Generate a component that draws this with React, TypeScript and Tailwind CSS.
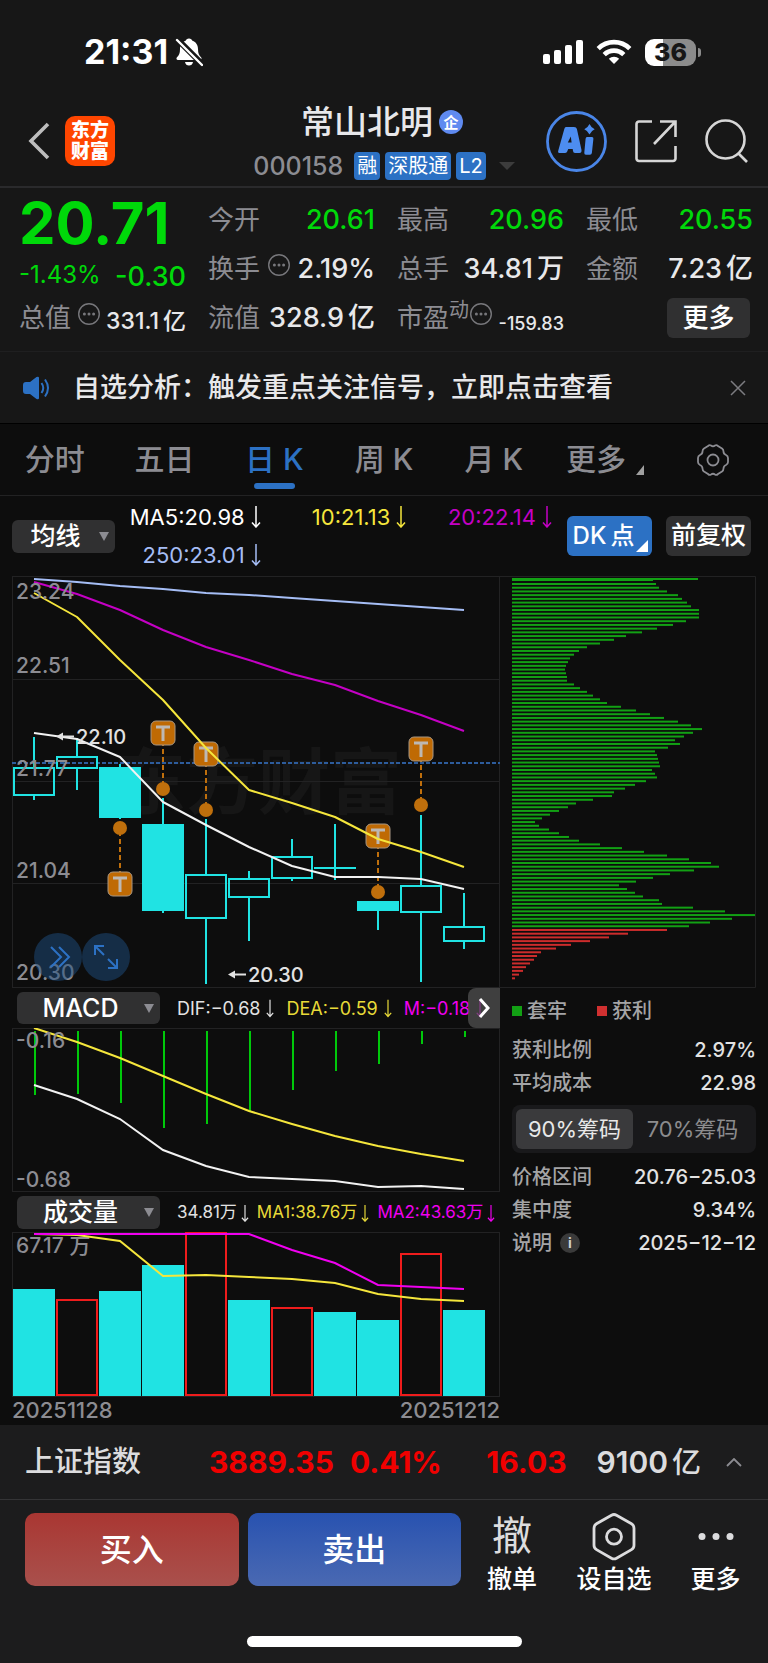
import React from 'react';

const STEP = 43;
const FIRST = 22;
const cx = (i: number) => FIRST + STEP * i;
const toPoints = (ys: number[]) => ys.map((y, i) => `${cx(i)},${y}`).join(' ');

// [high, body top, body bottom, low, filled]
const candles: [number, number, number, number, boolean][] = [
  [161, 192, 219, 224, false],
  [162, 181, 192, 214, false],
  [188, 192, 241, 243, true],
  [222, 249, 334, 337, true],
  [243, 299, 342, 408, false],
  [295, 303, 321, 365, false],
  [263, 281, 302, 305, false],
  [248, 292, 292, 304, false],
  [325, 326, 334, 354, true],
  [239, 310, 336, 406, false],
  [317, 351, 365, 373, false],
];

const ma5 = [157, 163, 181, 226, 249, 271, 290, 301, 301, 303, 313];
const ma10 = [17, 41, 84, 124, 172, 214, 227, 241, 263, 276, 291];
const ma20 = [6, 18, 34, 54, 71, 84, 98, 109, 125, 139, 155];
const ma250 = [3, 6, 10, 13, 17, 19, 22, 25, 28, 31, 34];

// candle index, y of the T box, y of the dot
const marks = [
  { i: 2, box: 308, dot: 252 },
  { i: 3, box: 157, dot: 213 },
  { i: 4, box: 178, dot: 234 },
  { i: 8, box: 260, dot: 316 },
  { i: 9, box: 173, dot: 229 },
];

const lossChips = [
  144, 147, 155, 166, 170, 175, 179, 187, 187, 187, 174, 161, 145, 130, 114, 102, 88, 75, 67, 62, 58, 56, 54, 53, 54,
  55, 55, 62, 68, 75, 81, 88, 95, 109, 124, 138, 152, 166, 179, 190, 181, 172, 163, 168, 156, 143, 145, 146, 147, 148,
  140, 143, 145, 134, 123, 113, 102, 100, 81, 64, 56, 47, 38, 30, 23, 27, 37, 47, 57, 67, 88, 110, 132, 155, 177, 199,
  207, 182, 158, 141, 124, 107, 115, 123, 131, 147, 150, 181, 213, 243, 220, 198, 177,
];
const profitChips = [155, 116, 97, 78, 59, 44, 29, 25, 22, 18, 14, 11, 7, 3];

const macdBars = [67, 66, 75, 100, 96, 84, 62, 43, 36, 16, 9];
const dea = [0, 14, 30, 48, 66, 83, 96, 108, 118, 126, 133];
const dif = [57, 71, 91, 122, 138, 149, 151, 153, 159, 158, 161];

const volumes = [
  { top: 57, up: false },
  { top: 68, up: true },
  { top: 59, up: false },
  { top: 33, up: false },
  { top: 1, up: true },
  { top: 68, up: false },
  { top: 76, up: true },
  { top: 80, up: false },
  { top: 88, up: false },
  { top: 22, up: true },
  { top: 78, up: false },
];
const volMa1 = [2, 3, 9, 44, 43, 45, 47, 51, 62, 67, 69];
const volMa2 = [2, 2, 2, 2, 2, 2, 18, 31, 53, 55, 57];

function Down({ className = 'h-[22px] w-[10px]' }: { className?: string }) {
  return (
    <svg viewBox="0 0 10 22" className={className} fill="none" stroke="currentColor" strokeWidth="1.5" aria-hidden="true">
      <path d="M5 0v21M1 16.5l4 4.5 4-4.5" />
    </svg>
  );
}

function Dots() {
  return (
    <svg viewBox="0 0 24 24" className="mb-2 h-6 w-6 shrink-0 text-[#77777b]" aria-hidden="true">
      <circle cx="12" cy="12" r="10.3" fill="none" stroke="currentColor" strokeWidth="1.4" />
      <circle cx="7.4" cy="12" r="1.5" fill="currentColor" />
      <circle cx="12" cy="12" r="1.5" fill="currentColor" />
      <circle cx="16.6" cy="12" r="1.5" fill="currentColor" />
    </svg>
  );
}

function StatusBar() {
  return (
    <div className="flex h-[98px] items-center justify-between pr-[67px] pl-[84px] pt-[6px]">
      <div className="flex items-center gap-[7px]">
        <span className="text-[34px] leading-none font-bold text-white">21:31</span>
        <svg viewBox="0 0 28 30" className="h-[30px] w-7" aria-hidden="true">
          <path
            d="M14 1.5c1.8 0 3 1 3.4 2.3 3.6 1.2 5.6 4.4 5.6 8.2 0 4.4 1 6.4 3 8.3 1 1 .6 2.7-1 2.7H3c-1.6 0-2-1.7-1-2.7 2-1.9 3-3.9 3-8.3 0-3.8 2-7 5.6-8.2C11 2.5 12.2 1.5 14 1.5zM10 25h8c-.4 2.3-2 3.6-4 3.6s-3.6-1.3-4-3.6z"
            fill="#fff"
          />
          <path d="M1 1l26 26" stroke="#171717" strokeWidth="6" />
          <path d="M2 3l25 25" stroke="#fff" strokeWidth="2.4" strokeLinecap="round" />
        </svg>
      </div>
      <div className="flex items-center gap-[13px]">
        <svg viewBox="0 0 40 26" className="h-[26px] w-10" fill="#fff" aria-hidden="true">
          <rect x="0" y="15" width="7" height="10" rx="2" />
          <rect x="11" y="11" width="7" height="14" rx="2" />
          <rect x="22" y="6" width="7" height="19" rx="2" />
          <rect x="33" y="1" width="7" height="24" rx="2" />
        </svg>
        <svg viewBox="0 0 36 26" className="h-[26px] w-9" fill="none" stroke="#fff" strokeWidth="4.6" aria-hidden="true">
          <path d="M2.2 9.6a22.5 22.5 0 0 1 31.6 0" />
          <path d="M8.2 15.6a14 14 0 0 1 19.6 0" />
          <path d="M18 25l-5.2-5.2a7.4 7.4 0 0 1 10.4 0z" fill="#fff" stroke="none" />
        </svg>
        <div className="flex items-center gap-[2px]">
          <div className="flex h-[27px] w-[51px] items-center justify-center rounded-[9px] bg-linear-to-r from-white from-36% to-[#8c8c8c] to-36% text-[25px] leading-none font-extrabold text-[#171717]">
            36
          </div>
          <div className="h-[9px] w-[3px] rounded-r-full bg-[#8c8c8c]" />
        </div>
      </div>
    </div>
  );
}

function Header() {
  return (
    <header className="grid h-[90px] grid-cols-[1fr_auto_1fr] items-center border-b-2 border-[#2a2a2c] pr-5 pb-[2px] pl-7">
      <div className="flex items-center gap-[15px]">
        <button type="button" aria-label="返回">
          <svg viewBox="0 0 22 38" className="h-[38px] w-[22px]" fill="none" stroke="#bdbdbd" strokeWidth="3.6">
            <path d="M20 2L3 19l17 17" />
          </svg>
        </button>
        <div className="flex h-[50px] w-[50px] flex-col items-center justify-center rounded-[10px] bg-[#ff4600] text-[19px] leading-[21px] font-black text-white">
          <span>东方</span>
          <span>财富</span>
        </div>
      </div>
      <div className="flex flex-col items-center gap-2.5 pr-3 whitespace-nowrap">
        <h1 className="flex items-center gap-1.5 text-[33px] leading-10 font-medium text-[#e8e8ea]">
          常山北明
          <span className="flex h-6 w-6 items-center justify-center rounded-full bg-[#5f8af0] text-[15px] leading-none font-bold text-white">
            企
          </span>
        </h1>
        <div className="flex items-center gap-[5px] pl-1 text-xl leading-7 text-white">
          <span className="mr-[6px] text-[25px] leading-7 font-medium text-[#8c8c92]">000158</span>
          <span className="rounded bg-[#2c71c4] px-[3px]">融</span>
          <span className="rounded bg-[#2c71c4] px-[3px]">深股通</span>
          <span className="rounded bg-[#2c71c4] px-[3px]">L2</span>
          <svg viewBox="0 0 16 8" className="ml-2 h-2 w-4" fill="#3c3c3c" aria-hidden="true">
            <path d="M0 0h16L8 8z" />
          </svg>
        </div>
      </div>
      <div className="flex items-center justify-end gap-7">
        <button type="button" aria-label="AI助手">
          <svg viewBox="0 0 61 61" className="h-[61px] w-[61px]" fill="#4d8df0">
            <circle cx="30.5" cy="30.5" r="29" fill="none" stroke="#4a86e8" strokeWidth="2.8" />
            <path
              fillRule="evenodd"
              d="M20 16h8q2.5 0 2.9 2l4.6 21q.3 3-2 3h-4.5q-1.8 0-2-2l-.3-2h-4.5l-1 2.400q-.7 1.6-2.4 1.6h-4.7q-2.7 0-1.8-2.6l6-21.4q.5-2 1.7-2zM21.8 31.5h3.8l-.8-6z"
            />
            <path d="M41 26h5q1.6 0 1.4 1.800l-1.5 14q-.2 2-2 2h-4q-1.8 0-1.6-2l1.3-14q.2-1.8 1.4-1.8z" />
            <path d="M43.5 13q1.6 3.6 5.2 5.2-3.6 1.6-5.2 5.2-1.6-3.6-5.2-5.2 3.6-1.6 5.2-5.2z" />
          </svg>
        </button>
        <button type="button" aria-label="分享">
          <svg viewBox="0 0 42 44" className="h-11 w-[42px]" fill="none" stroke="#d6d6d6" strokeWidth="2.6">
            <path d="M17 2.5H4A2.5 2.5 0 0 0 1.5 5v34.5A2.5 2.5 0 0 0 4 42h34a2.5 2.5 0 0 0 2.5-2.5V27" />
            <path d="M25 2.5h15.5V18M40 3L19 25" />
          </svg>
        </button>
        <button type="button" aria-label="搜索">
          <svg viewBox="0 0 43 46" className="h-[46px] w-[43px]" fill="none" stroke="#d6d6d6" strokeWidth="2.6">
            <circle cx="20.5" cy="21.5" r="19" />
            <path d="M33 35l9 9" />
          </svg>
        </button>
      </div>
    </header>
  );
}

const label = 'text-[26px] text-[#8c8c92]';
const value = 'text-[27px] font-medium text-[#e8e8ea]';
const green = 'text-[27px] font-medium text-[#00d90a]';

// number followed by 万 or 亿
function Amount({ n, unit }: { n: string; unit: string }) {
  return (
    <span className={value}>
      {n}
      <span className="ml-1">{unit}</span>
    </span>
  );
}

function Quote() {
  return (
    <section className="grid grid-cols-4 gap-x-[22px] border-b border-[#1f1f20] pt-[7px] pr-[15px] pb-[9px] pl-[19px] leading-[30px] whitespace-nowrap">
      <div className="flex h-[49px] items-center pt-1.5 text-[58px] leading-none font-bold text-[#00d90a]">20.71</div>
      <div className="flex h-[49px] items-center justify-between">
        <span className={label}>今开</span>
        <span className={green}>20.61</span>
      </div>
      <div className="flex h-[49px] items-center justify-between">
        <span className={label}>最高</span>
        <span className={green}>20.96</span>
      </div>
      <div className="flex h-[49px] items-center justify-between">
        <span className={label}>最低</span>
        <span className={green}>20.55</span>
      </div>

      <div className="flex h-[49px] items-center justify-between pt-3 text-[#00d90a]">
        <span className="text-[24px]">-1.43%</span>
        <span className="pt-1 text-[27px] font-medium">-0.30</span>
      </div>
      <div className="flex h-[49px] items-center justify-between">
        <span className={label}>换手</span>
        <Dots />
        <span className={value}>2.19%</span>
      </div>
      <div className="flex h-[49px] items-center justify-between">
        <span className={label}>总手</span>
        <Amount n="34.81" unit="万" />
      </div>
      <div className="flex h-[49px] items-center justify-between">
        <span className={label}>金额</span>
        <Amount n="7.23" unit="亿" />
      </div>

      <div className="flex h-[49px] items-center justify-between">
        <span className={label}>总值</span>
        <Dots />
        <span className="pt-1.5 text-[23px] font-medium text-[#e8e8ea]">
          331.1<span className="ml-1">亿</span>
        </span>
      </div>
      <div className="flex h-[49px] items-center justify-between">
        <span className={label}>流值</span>
        <Amount n="328.9" unit="亿" />
      </div>
      <div className="flex h-[49px] items-center">
        <span className={label}>市盈</span>
        <span className="pb-4 text-xl text-[#8c8c92]">动</span>
        <Dots />
        <span className="ml-auto pt-3 text-[18px] font-medium text-[#e8e8ea]">-159.83</span>
      </div>
      <div className="flex h-[49px] items-center justify-end pr-[3px]">
        <button type="button" className="h-10 w-[83px] rounded-md bg-[#303031] text-[26px] font-medium text-white">
          更多
        </button>
      </div>
    </section>
  );
}

function Notice() {
  return (
    <div className="flex h-[72px] items-center border-b border-black pr-[22px] pl-[23px]">
      <svg viewBox="0 0 27 24" className="h-6 w-[27px]" fill="#2c71c4" aria-hidden="true">
        <path d="M3 6h4l6.5-5q2.5-1 2.5 1v20q0 2-2.5 1L7 18H3q-3 0-3-3V9q0-3 3-3z" />
        <path d="M18.5 7q3.5 5 0 10M22 3.5q6 8.500 0 17" fill="none" stroke="#2c71c4" strokeWidth="2" />
      </svg>
      <a href="#signal" className="ml-[23px] text-[27px] leading-9 font-medium whitespace-nowrap text-[#e8e8ea]">
        自选分析：触发重点关注信号，立即点击查看
      </a>
      <button type="button" aria-label="关闭" className="ml-auto">
        <svg viewBox="0 0 16 16" className="h-4 w-4" stroke="#7c7c80" strokeWidth="1.5">
          <path d="M1 1l14 14M15 1L1 15" />
        </svg>
      </button>
    </div>
  );
}

const tabs = ['分时', '五日', '日 K', '周 K', '月 K'];

function Tabs() {
  const [active, setActive] = React.useState('日 K');
  return (
    <nav className="grid h-[72px] grid-cols-7 border-b border-[#222223] text-[30px] leading-10 font-medium">
      {tabs.map((t) => (
        <button
          key={t}
          type="button"
          onClick={() => setActive(t)}
          className={`flex flex-col items-center pt-[15px] ${t === active ? 'text-[#2c71c4]' : 'text-[#8c8c92]'}`}
        >
          {t}
          {t === active && <span className="mt-1 h-[6px] w-[41px] rounded-full bg-[#2c71c4]" />}
        </button>
      ))}
      <button type="button" className="flex items-start justify-center gap-2.5 pt-[15px] pl-[3px] text-[#8c8c92]">
        更多
        <svg viewBox="0 0 8 10" className="mt-[26px] h-2.5 w-2" fill="#a0a0a0" aria-hidden="true">
          <path d="M8 0v10H0z" />
        </svg>
      </button>
      <button type="button" aria-label="设置" className="flex items-center justify-center">
        <svg viewBox="0 0 34 34" className="h-[34px] w-[34px]" fill="none" stroke="#8c8c92" strokeWidth="1.8">
          <path d="M12 3q1.5-1.5 3-.5 2 1.500 4 0 1.5-1 3 .5l4 2.5q1.5 1 1.5 3 0 2.5 2.5 3.5Q32 13 32 15v4q0 2-2 3-2.5 1-2.500 3.5 0 2-1.500 3l-4 2.5q-1.5 1.5-3 .5-2-1.5-4 0-1.5 1-3-.5l-4-2.5q-1.5-1-1.5-3Q6.500 23 4 22q-2-1-2-3v-4q0-2 2-3 2.5-1 2.500-3.5 0-2 1.500-3z" />
          <circle cx="17" cy="17" r="5.5" />
        </svg>
      </button>
    </nav>
  );
}

function Picker({ name, text, className }: { name: string; text: string; className: string }) {
  return (
    <div className={`flex items-center rounded-md bg-[#303031] text-white ${className}`}>
      <select
        aria-label={name}
        className="h-full min-w-0 flex-1 appearance-none bg-transparent text-center text-[25px] leading-8 font-medium outline-none"
      >
        <option>{text}</option>
      </select>
      <svg viewBox="0 0 10 9" className="mr-1.5 h-[9px] w-[10px] shrink-0" fill="#8c8c92" aria-hidden="true">
        <path d="M0 0h10L5 9z" />
      </svg>
    </div>
  );
}

function Averages() {
  return (
    <div className="flex h-20 items-center justify-between pr-[17px] pl-3">
      <Picker name="主图指标" text="均线" className="h-[33px] w-[103px]" />
      <div className="grid flex-1 grid-cols-3 gap-y-1.5 pr-[15px] text-[22px] leading-8 whitespace-nowrap">
        <span className="flex items-center justify-end gap-1.5 text-white">
          MA5:20.98
          <Down />
        </span>
        <span className="flex items-center justify-end gap-1.5 text-[#f5e63c]">
          10:21.13
          <Down />
        </span>
        <span className="flex items-center justify-end gap-1.5 text-[#c400c4]">
          20:22.14
          <Down />
        </span>
        <span className="flex items-center justify-end gap-1.5 text-[#a5bdf5]">
          250:23.01
          <Down />
        </span>
      </div>
      <div className="flex gap-3.5 text-2xl font-medium whitespace-nowrap text-white">
        <button type="button" className="relative h-10 w-[85px] rounded-md bg-[#2c71c4] pr-3">
          DK<span className="ml-1">点</span>
          <svg viewBox="0 0 12 12" className="absolute right-1 bottom-1 h-3 w-3" fill="#fff" aria-hidden="true">
            <path d="M12 0v12H0z" />
          </svg>
        </button>
        <button type="button" className="h-10 w-[85px] rounded-md bg-[#303031] text-[25px]">
          前复权
        </button>
      </div>
    </div>
  );
}

function KChart() {
  return (
    <div className="relative">
      <svg viewBox="0 0 488 412" className="block w-full" fill="none">
        <text x="246" y="232" textAnchor="middle" fontSize="72" fontWeight="700" fill="#161616">
          东方财富
        </text>
        <g stroke="#222223" strokeWidth="1">
          <rect x="0.5" y="0.5" width="487" height="411" />
          <path d="M0 103.5h488M0 205.5h488M0 307.5h488" />
        </g>

        <path d="M0 187h488" stroke="#2d5c9c" strokeWidth="2" strokeDasharray="4 2" />

        {candles.map(([high, top, bottom, low, filled], i) => (
          <g key={i} stroke="#20e3e3" strokeWidth="2">
            <path d={`M${cx(i)} ${high}V${top}M${cx(i)} ${bottom}V${low}`} />
            {top === bottom ? (
              <path d={`M${cx(i) - 21} ${top}h42`} />
            ) : (
              <rect x={cx(i) - 20} y={top} width="40" height={bottom - top} fill={filled ? '#20e3e3' : 'none'} />
            )}
          </g>
        ))}

        {marks.map(({ i, box, dot }) => (
          <g key={i}>
            <path d={`M${cx(i)} ${box}V${dot}`} stroke="#bf6f0c" strokeWidth="2" strokeDasharray="5 3" />
            <circle cx={cx(i)} cy={dot} r="7" fill="#bf6f0c" />
            <rect x={cx(i) - 12} y={box - 12} width="24" height="24" rx="5" fill="#bf6a04" stroke="#a79683" />
            <path d={`M${cx(i) - 7} ${box - 6}h14M${cx(i)} ${box - 6}v14`} stroke="#bdb8b3" strokeWidth="3" />
          </g>
        ))}

        <g strokeWidth="2" strokeLinejoin="round">
          <polyline points={toPoints(ma250)} stroke="#a5bdf5" />
          <polyline points={toPoints(ma20)} stroke="#c400c4" />
          <polyline points={toPoints(ma10)} stroke="#f5e63c" />
          <polyline points={toPoints(ma5)} stroke="#f2f2f2" />
        </g>

        <g fill="#8c8c92" fontSize="21" fontWeight="500">
          <text x="4" y="23">23.24</text>
          <text x="4" y="97">22.51</text>
          <text x="4" y="200">21.77</text>
          <text x="4" y="302">21.04</text>
          <text x="4" y="404">20.30</text>
        </g>
        <g fill="#e2e2e2" stroke="none" fontSize="20" fontWeight="500">
          <text x="64" y="168">22.10</text>
          <path d="M44 160.5l7-4v3h11v2H51v3z" />
          <text x="236" y="406">20.30</text>
          <path d="M216 398.5l7-4v3h11v2h-11v3z" />
        </g>
      </svg>
      <div className="absolute bottom-[7px] left-[22px] flex">
        <button
          type="button"
          aria-label="展开"
          className="flex h-12 w-12 items-center justify-center rounded-full bg-[#1d4d80]/50"
        >
          <svg viewBox="0 0 22 22" className="ml-1 h-[22px] w-[22px]" fill="none" stroke="#2c71c4" strokeWidth="2">
            <path d="M2 1l10 10L2 21M10 1l10 10-10 10" />
          </svg>
        </button>
        <button
          type="button"
          aria-label="全屏"
          className="flex h-12 w-12 items-center justify-center rounded-full bg-[#1d4d80]/50"
        >
          <svg viewBox="0 0 24 24" className="h-6 w-6" fill="none" stroke="#2c71c4" strokeWidth="2">
            <path d="M10 1H1v9M1 1l9 9M14 14l9 9M14 23h9v-9" />
          </svg>
        </button>
      </div>
    </div>
  );
}

function MacdPanel() {
  return (
    <>
      <div className="relative flex h-10 items-center pl-[5px] text-[18px] whitespace-nowrap">
        <Picker name="指标" text="MACD" className="h-8 w-[143px]" />
        <span className="ml-[17px] flex items-center gap-1.5 text-[#e2e2e2]">
          DIF:−0.68
          <Down className="h-[19px] w-2" />
        </span>
        <span className="ml-3 flex items-center gap-1.5 text-[#e8da38]">
          DEA:−0.59
          <Down className="h-[19px] w-2" />
        </span>
        <span className="ml-3 flex items-center gap-1.5 text-[#f000f0]">
          M:−0.18
          <Down className="h-[19px] w-2" />
        </span>
        <button
          type="button"
          aria-label="下一个"
          className="absolute top-0 right-0 flex h-10 w-8 items-center justify-center rounded-l-lg bg-[#555556]/70"
        >
          <svg viewBox="0 0 12 20" className="h-5 w-3" fill="none" stroke="#fff" strokeWidth="3">
            <path d="M2 1l8 9-8 9" />
          </svg>
        </button>
      </div>
      <svg viewBox="0 0 488 164" className="block w-full" fill="none">
        <rect x="0.5" y="0.5" width="487" height="163" stroke="#222223" />
        {macdBars.map((y, i) => (
          <path key={i} d={`M${cx(i) + 1} 3V${y}`} stroke="#00c80a" strokeWidth="2" />
        ))}
        <polyline points={toPoints(dea)} stroke="#f5e63c" strokeWidth="2" />
        <polyline points={toPoints(dif)} stroke="#f2f2f2" strokeWidth="2" />
        <g fill="#8c8c92" fontSize="21" fontWeight="500">
          <text x="4" y="20">-0.16</text>
          <text x="4" y="159">-0.68</text>
        </g>
      </svg>
    </>
  );
}

function VolumePanel() {
  return (
    <>
      <div className="flex h-10 items-center pl-[5px] text-[17px] whitespace-nowrap">
        <Picker name="副图指标" text="成交量" className="h-[33px] w-[143px]" />
        <span className="ml-[17px] flex items-center gap-1 pt-[2px] text-[#e2e2e2]">
          34.81万
          <Down className="h-[17px] w-2" />
        </span>
        <span className="ml-2 flex items-center gap-1 pt-[2px] text-[#e8da38]">
          MA1:38.76万
          <Down className="h-[17px] w-2" />
        </span>
        <span className="ml-2 flex items-center gap-1 pt-[2px] text-[#f000f0]">
          MA2:43.63万
          <Down className="h-[17px] w-2" />
        </span>
      </div>
      <svg viewBox="0 0 488 165" className="block w-full" fill="none">
        <rect x="0.5" y="0.5" width="487" height="164" stroke="#222223" />
        {volumes.map(({ top, up }, i) =>
          up ? (
            <rect key={i} x={cx(i) - 20} y={top} width="40" height={163 - top} stroke="#ee1c1c" strokeWidth="2" />
          ) : (
            <rect key={i} x={cx(i) - 21} y={top} width="42" height={164 - top} fill="#20e3e3" />
          ),
        )}
        <text x="4" y="21" fill="#8c8c92" fontSize="21" fontWeight="500">
          67.17 万
        </text>
        <polyline points={toPoints(volMa1)} stroke="#f5e63c" strokeWidth="2" />
        <polyline points={toPoints(volMa2)} stroke="#f000f0" strokeWidth="2" />
      </svg>
      <div className="flex h-7 items-center justify-between pb-[2px] text-[22px] leading-7 font-medium text-[#8c8c92]">
        <span>20251128</span>
        <span>20251212</span>
      </div>
    </>
  );
}

function Stat({ name, children }: { name: React.ReactNode; children: React.ReactNode }) {
  return (
    <div className="flex h-[33px] items-center justify-between">
      <dt className="flex items-center gap-2 text-[#a4a4a6]">{name}</dt>
      <dd className="text-[#e2e2e2]">{children}</dd>
    </div>
  );
}

function ChipsPanel() {
  return (
    <div>
      <svg viewBox="0 0 256 412" className="block w-full" fill="none">
        <path d="M0 0.5h255.5v411H0" stroke="#222223" />
        <rect x="12" y="2" width="186" height="2" fill="#12a014" />
        <rect x="12" y="4" width="141" height="1" fill="#12a014" />
        {lossChips.map((w, i) => (
          <rect key={i} x="12" y={7 + i * 3.72} width={w} height="2" fill="#12a014" />
        ))}
        {profitChips.map((w, i) => (
          <rect key={i} x="12" y={7 + (lossChips.length + i) * 3.72} width={w} height="2" fill="#cc2c2c" />
        ))}
      </svg>
      <div className="pl-3 text-xl leading-7 font-medium">
        <div className="flex h-[45px] items-center gap-[30px] text-[#a4a4a6]">
          <span className="flex items-center gap-[5px]">
            <i className="h-2.5 w-2.5 bg-[#12a014]" />
            套牢
          </span>
          <span className="flex items-center gap-[5px]">
            <i className="h-2.5 w-2.5 bg-[#d03030]" />
            获利
          </span>
        </div>
        <dl>
          <Stat name="获利比例">2.97%</Stat>
          <Stat name="平均成本">22.98</Stat>
        </dl>
        <div className="mt-1.5 mb-[7px] flex h-12 rounded-lg bg-[#19191b] p-1 text-[22px] font-normal">
          <button type="button" aria-pressed="true" className="w-[117px] rounded-md bg-[#3a3a3c] text-[#e8e8e8]">
            90%筹码
          </button>
          <button type="button" aria-pressed="false" className="flex-1 text-[#8c8c8e]">
            70%筹码
          </button>
        </div>
        <dl>
          <Stat name="价格区间">20.76−25.03</Stat>
          <Stat name="集中度">9.34%</Stat>
          <Stat
            name={
              <>
                说明
                <span className="flex h-5 w-5 items-center justify-center rounded-full bg-[#3a3a3a] text-sm font-bold text-[#d0d0d0]">
                  i
                </span>
              </>
            }
          >
            2025−12−12
          </Stat>
        </dl>
      </div>
    </div>
  );
}

function IndexBar() {
  return (
    <div className="flex h-[75px] items-center border-b border-[#343436] bg-[#1c1c1d] pr-[26px] pl-[25px] text-[30px] font-bold whitespace-nowrap text-[#f00000]">
      <span className="w-[184px] text-[29px] font-medium text-[#dcdcde]">上证指数</span>
      <span>3889.35</span>
      <span className="ml-4">0.41%</span>
      <span className="ml-auto">16.03</span>
      <span className="ml-[30px] font-semibold text-[#dcdcde]">
        9100<span className="ml-1 text-[29px] font-medium">亿</span>
      </span>
      <button type="button" aria-label="展开指数" className="ml-[25px]">
        <svg viewBox="0 0 16 9" className="h-[9px] w-4" fill="none" stroke="#8c8c92" strokeWidth="1.8">
          <path d="M1 8l7-7 7 7" />
        </svg>
      </button>
    </div>
  );
}

function Footer() {
  return (
    <footer className="flex h-[163px] flex-col items-center justify-between bg-[#1c1c1d] pt-[13px] pb-4">
      <div className="flex w-full items-start pr-[10px] pl-[25px] text-[25px] leading-9 font-medium text-white">
        <button
          type="button"
          className="mr-[9px] h-[73px] flex-1 rounded-[10px] bg-linear-to-b from-[#a93632] to-[#a9504c] text-[32px]"
        >
          买入
        </button>
        <button
          type="button"
          className="h-[73px] flex-1 rounded-[10px] bg-linear-to-b from-[#2852b0] to-[#4a69b2] text-[32px]"
        >
          卖出
        </button>
        <button type="button" className="flex w-[102px] flex-col items-center">
          <span className="h-12 text-[40px] leading-[46px] font-normal text-[#dcdcde]">撤</span>
          撤单
        </button>
        <button type="button" className="flex w-[102px] flex-col items-center">
          <svg viewBox="0 0 44 48" className="h-12 w-11" fill="none" stroke="#dcdcde" strokeWidth="2.8">
            <path d="M19.5 2.2q2.5-1.4 5 0l15 8.6q2.5 1.5 2.5 4.4v17q0 2.9-2.5 4.4l-15 8.6q-2.5 1.4-5 0l-15-8.6Q2 35.100 2 32.2v-17q0-2.9 2.5-4.4z" />
            <circle cx="22" cy="23.7" r="7.5" />
          </svg>
          设自选
        </button>
        <button type="button" className="flex w-[93px] flex-col items-center pl-2">
          <svg viewBox="0 0 36 48" className="h-12 w-9" fill="#dcdcde" aria-hidden="true">
            <circle cx="4" cy="23.5" r="3.5" />
            <circle cx="18" cy="23.5" r="3.5" />
            <circle cx="32" cy="23.5" r="3.5" />
          </svg>
          更多
        </button>
      </div>
      <div className="h-[11px] w-[275px] rounded-full bg-white" />
    </footer>
  );
}

export default function App() {
  return (
    <div lang="zh-CN" className="min-h-screen bg-[#0d0d0d] font-['Inter','Noto_Sans_CJK_SC',sans-serif]">
      <div className="bg-[#171717]">
        <StatusBar />
        <Header />
        <Quote />
        <Notice />
      </div>
      <Tabs />
      <Averages />
      <main className="grid grid-cols-[488fr_256fr] px-3">
        <div>
          <KChart />
          <MacdPanel />
          <VolumePanel />
        </div>
        <ChipsPanel />
      </main>
      <IndexBar />
      <Footer />
    </div>
  );
}
